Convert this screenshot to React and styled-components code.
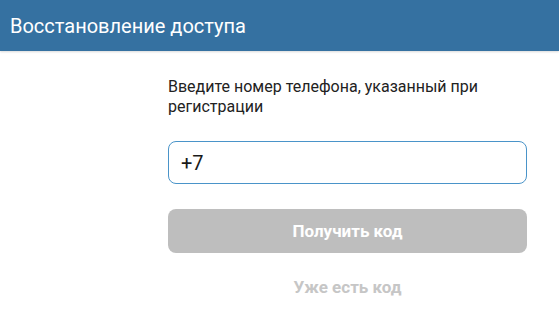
import React from "react";
import styled, { createGlobalStyle } from "styled-components";

const GlobalStyle = createGlobalStyle`
  body {
    margin: 0;
    background: #ffffff;
    font-family: Roboto, "Noto Sans", sans-serif;
  }
`;

const Page = styled.div`
  width: 559px;
  height: 312px;
  overflow: hidden;
  background: #fff;
`;

const Header = styled.header`
  height: 51px;
  background: #3571a1;
  display: flex;
  align-items: center;
  padding: 0 10px;
  box-shadow: 0 1px 2px rgba(0, 0, 0, 0.15);

  h1 {
    margin: 0;
    color: #fff;
    font-size: 20px;
    font-weight: 400;
  }
`;

const Form = styled.form`
  width: 359px;
  margin-left: 168px;
  padding-top: 26px;
  display: flex;
  flex-direction: column;
`;

const Hint = styled.p`
  margin: 0;
  font-size: 16px;
  line-height: 20px;
  color: #222;
`;

const PhoneInput = styled.input`
  box-sizing: border-box;
  margin-top: 24px;
  height: 43px;
  width: 100%;
  border: 1px solid #4a94c9;
  border-radius: 8px;
  padding: 0 12px;
  font-family: inherit;
  font-size: 20px;
  color: #1a1a1a;
  outline: none;
`;

const Button = styled.button`
  margin-top: 25px;
  height: 44px;
  width: 100%;
  border: none;
  border-radius: 8px;
  background: ${(p) => (p.$disabled ? "#bebebe" : "#3571a1")};
  color: #fff;
  font-family: inherit;
  font-size: 17px;
  font-weight: 700;
`;

const LinkButton = styled.button`
  margin-top: 24px;
  background: none;
  border: none;
  padding: 0;
  align-self: center;
  font-family: inherit;
  font-size: 17px;
  font-weight: 700;
  color: #c6c6c6;
`;

export default function App() {
  return (
    <Page>
      <GlobalStyle />
      <Header>
        <h1>Восстановление доступа</h1>
      </Header>
      <Form onSubmit={(e) => e.preventDefault()}>
        <Hint>Введите номер телефона, указанный при регистрации</Hint>
        <PhoneInput type="tel" defaultValue="+7" />
        <Button type="submit" $disabled>
          Получить код
        </Button>
        <LinkButton type="button">Уже есть код</LinkButton>
      </Form>
    </Page>
  );
}
